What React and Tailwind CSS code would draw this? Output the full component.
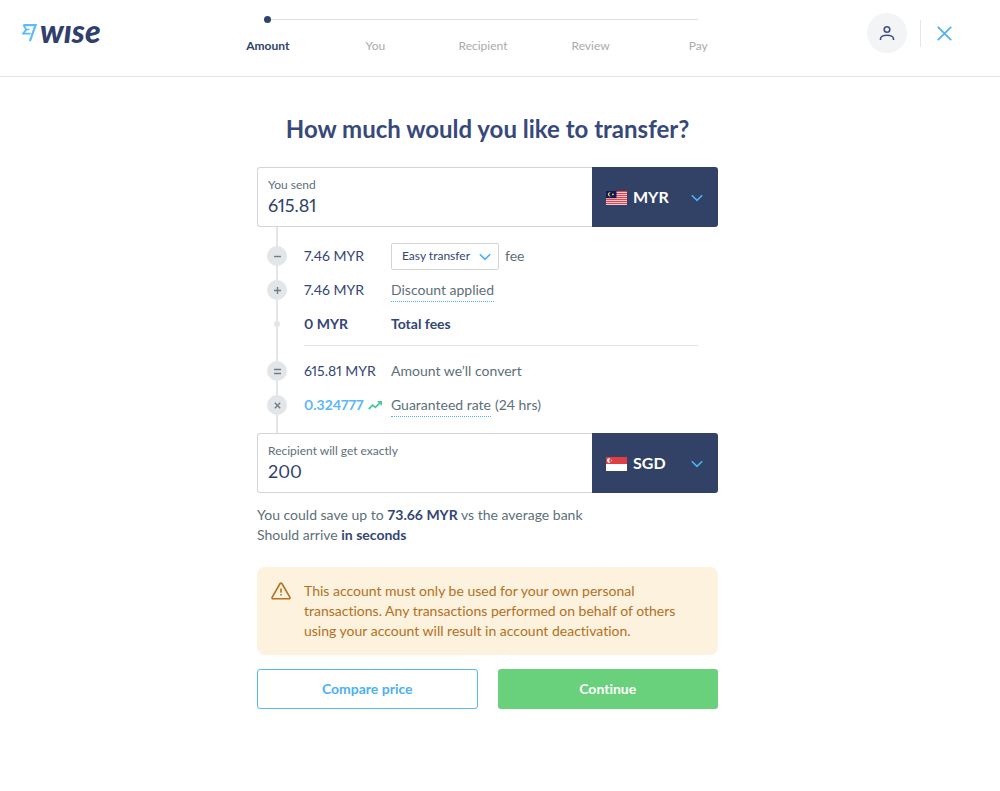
import React from "react";

const steps = ["Amount", "You", "Recipient", "Review", "Pay"];

function Chevron({ className }) {
  return (
    <svg className={className} viewBox="0 0 12 8" fill="none" stroke="currentColor" strokeWidth="1.6" aria-hidden="true">
      <path d="M0.8 1.2 6 6.4l5.2-5.2" />
    </svg>
  );
}

function Logo() {
  return (
    <a href="#home" aria-label="Wise" className="flex items-end gap-[3px]">
      <svg className="mb-[5px] h-[18px] w-[15px]" viewBox="0 0 15 18" fill="none" stroke="#5cbcf8" aria-hidden="true">
        <path d="M1.4 1.2H13.6L7.9 17.2" strokeWidth="2.2" />
        <path d="M1.6 1.2 4.2 5.6 1.2 9.6H8.6" strokeWidth="1.9" />
        <path d="M3.8 5.5H7.6" strokeWidth="1.4" />
      </svg>
      <span className="text-[32px] leading-8 font-black italic text-[#303f6b]">wıse</span>
    </a>
  );
}

function Stepper() {
  return (
    <nav aria-label="Progress" className="pt-4">
      <div className="mr-[54px] ml-[50px] flex h-[7px] items-center">
        <span className="size-[7px] rounded-full bg-[#2e4369]" />
        <span className="h-px flex-1 bg-[#dcdfe5]" />
      </div>
      <ol className="mt-[15px] grid grid-cols-5 text-center text-xs text-[#a9abac]">
        {steps.map((step, i) => (
          <li key={step} aria-current={i === 0 ? "step" : undefined} className={i === 0 ? "font-bold text-[#2e4369]" : ""}>
            {step}
          </li>
        ))}
      </ol>
    </nav>
  );
}

function MalaysiaFlag() {
  return (
    <svg className="h-[14px] w-[21px]" viewBox="0 0 21 14" aria-hidden="true">
      <rect width="21" height="14" fill="#fbe9ea" />
      {[0, 2, 4, 6, 8, 10, 12].map((y) => (
        <rect key={y} y={y} width="21" height="1.2" fill="#e0434d" />
      ))}
      <rect width="10.5" height="7.2" fill="#0d1a5c" />
      <path d="M5 1.6A2.1 2.1 0 1 0 5 5.2 1.8 1.8 0 1 1 5 1.6Z" fill="#f5d33c" />
      <circle cx="6.9" cy="3.4" r="0.9" fill="#f5d33c" />
    </svg>
  );
}

function SingaporeFlag() {
  return (
    <svg className="h-[14px] w-[21px]" viewBox="0 0 21 14" aria-hidden="true">
      <rect width="21" height="14" fill="#fff" />
      <rect width="21" height="7" fill="#df3f43" />
      <path d="M4.2 1.4A2.3 2.3 0 1 0 4.2 5.6 2.7 2.7 0 0 1 4.2 1.4Z" fill="#fff" />
      <circle cx="5" cy="2.6" r="0.4" fill="#fff" />
      <circle cx="5.8" cy="3.5" r="0.4" fill="#fff" />
      <circle cx="5" cy="4.5" r="0.4" fill="#fff" />
    </svg>
  );
}

function MoneyField({ id, label, value, currency, flag }) {
  return (
    <div className="flex h-[60px]">
      <div className="flex min-w-0 flex-1 flex-col justify-center rounded-l-[3px] border border-r-0 border-[#d3d5d8] px-[10px]">
        <label htmlFor={id} className="text-xs leading-4 text-[#5d7079]">{label}</label>
        <input id={id} defaultValue={value} className="h-6 w-full text-lg leading-6 text-[#2e4369] proportional-nums outline-none" />
      </div>
      <div className="relative w-[126px] rounded-r-[3px] bg-[#324166] text-white">
        <span className="pointer-events-none absolute top-6 left-[14px]">{flag}</span>
        <select
          aria-label={label + " currency"}
          defaultValue={currency}
          className="size-full appearance-none bg-transparent pl-[41px] text-base font-bold outline-none"
        >
          <option>{currency}</option>
        </select>
        <Chevron className="pointer-events-none absolute top-[27px] right-[15px] h-2 w-3 text-[#4db1f5]" />
      </div>
    </div>
  );
}

const symbols = {
  minus: "M1 4.5h7",
  plus: "M1 4.5h7M4.5 1v7",
  equals: "M1 2.5h7M1 6.5h7",
  times: "M1.8 1.8l5.4 5.4M7.2 1.8 1.8 7.2",
};

function Row({ symbol, children }) {
  return (
    <li className="flex h-[34px] items-center">
      <span className="flex w-10 shrink-0 items-center pl-[10px]">
        {symbol ? (
          <span className="flex size-5 items-center justify-center rounded-full bg-[#e2e6e8]">
            <svg className="size-[9px]" viewBox="0 0 9 9" fill="none" stroke="#6f7e86" strokeWidth="1.4" aria-hidden="true">
              <path d={symbols[symbol]} />
            </svg>
          </span>
        ) : (
          <span className="mx-[7px] size-[6px] rounded-full bg-[#e2e6e8]" />
        )}
      </span>
      <span className="flex flex-1 items-center pl-[7px]">{children}</span>
    </li>
  );
}

function Amount({ children, className = "" }) {
  return <span className={"w-[87px] shrink-0 whitespace-nowrap proportional-nums " + className}>{children}</span>;
}

function Breakdown() {
  return (
    <div className="relative pt-3 pb-[11px] text-[#344675]">
      <span className="absolute inset-y-0 left-[19px] w-[2px] bg-[#e2e6e8]" />
      <ul className="relative">
        <Row symbol="minus">
          <Amount>7.46 MYR</Amount>
          <span className="relative">
            <select
              aria-label="Transfer type"
              defaultValue="Easy transfer"
              className="h-[27px] w-[108px] appearance-none rounded-[2px] border border-[#d3d5d8] bg-white pl-[10px] text-xs outline-none"
            >
              <option>Easy transfer</option>
            </select>
            <Chevron className="pointer-events-none absolute top-[10px] right-2 h-2 w-3 text-[#4db1f5]" />
          </span>
          <span className="pl-[6px] text-[#5d7079]">fee</span>
        </Row>
        <Row symbol="plus">
          <Amount>7.46 MYR</Amount>
          <a href="#discount" className="border-y border-t-transparent border-b-[#4db1f5] border-dotted py-px text-[#5d7079]">Discount applied</a>
        </Row>
        <Row>
          <Amount className="font-bold">0 MYR</Amount>
          <span className="font-bold">Total fees</span>
        </Row>
      </ul>
      <hr className="mt-1 mr-5 mb-2 ml-[47px] border-[#e2e6e8]" />
      <ul className="relative">
        <Row symbol="equals">
          <Amount>615.81 MYR</Amount>
          <span className="text-[#5d7079]">Amount we’ll convert</span>
        </Row>
        <Row symbol="times">
          <Amount className="flex items-center gap-1 font-bold text-[#5bb7f7]">
            0.324777
            <svg className="h-[9px] w-[14px]" viewBox="0 0 14 9" fill="none" aria-hidden="true">
              <path d="M0.8 8 4.6 4.2 7.4 6.4 12.4 1.4" stroke="#4fc59b" strokeWidth="1.8" />
              <path d="M9 0h5v5Z" fill="#4fc59b" />
            </svg>
          </Amount>
          <a href="#rate" className="border-y border-t-transparent border-b-[#4db1f5] border-dotted py-px text-[#5d7079]">Guaranteed rate</a>
          <span className="pl-1 text-[#5d7079]">(24 hrs)</span>
        </Row>
      </ul>
    </div>
  );
}

export default function App() {
  return (
    <div className="min-h-screen bg-white font-['Lato','Liberation_Sans',sans-serif] text-sm [font-variant-ligatures:none]">
      <header className="grid h-[77px] grid-cols-[1fr_538px_1fr] border-b border-[#e4e5e7] pr-[34px]">
        <div className="flex h-[62px] items-center pl-[22px]">
          <Logo />
        </div>
        <Stepper />
        <div className="flex h-[66px] items-center justify-end">
          <button aria-label="Account" className="flex size-10 items-center justify-center rounded-full bg-[#f2f4f6]">
            <svg className="size-4" viewBox="0 0 16 16" fill="none" stroke="#3f5080" strokeWidth="1.6" aria-hidden="true">
              <circle cx="8" cy="4.5" r="2.8" />
              <path d="M1.5 15v-1.2c0-2 2.8-3.5 6.5-3.5s6.5 1.5 6.5 3.5V15" />
            </svg>
          </button>
          <span className="ml-[13px] h-[27px] w-px bg-[#e4e6e9]" />
          <button aria-label="Close" className="ml-[2px] flex size-[43px] items-center justify-center">
            <svg className="size-[15px]" viewBox="0 0 15 15" fill="none" stroke="#4db1f5" strokeWidth="1.7" aria-hidden="true">
              <path d="M0.8 0.8l13.4 13.4M14.2 0.8 0.8 14.2" />
            </svg>
          </button>
        </div>
      </header>

      <main className="pr-[25px]">
        <div className="mx-auto max-w-[461px] pt-9 pb-10">
          <h1 className="text-center text-2xl leading-8 font-bold whitespace-nowrap text-[#37497b]">How much would you like to transfer?</h1>
          <div className="mt-[22px]">
            <MoneyField id="send" label="You send" value="615.81" currency="MYR" flag={<MalaysiaFlag />} />
            <Breakdown />
            <MoneyField id="receive" label="Recipient will get exactly" value="200" currency="SGD" flag={<SingaporeFlag />} />
          </div>
          <div className="mt-3 text-[#5d7079]">
            <p>You could save up to <b className="text-[#344675]">73.66 MYR</b> vs the average bank</p>
            <p>Should arrive <b className="text-[#344675]">in seconds</b></p>
          </div>
          <div role="note" className="mt-[22px] flex gap-[13px] rounded-lg bg-[#fcf2de] py-[14px] pr-5 pl-[14px] text-[#b3701f]">
            <svg className="mt-px h-[18px] w-5 shrink-0" viewBox="0 0 20 18" fill="none" stroke="currentColor" strokeWidth="1.6" strokeLinejoin="round" aria-hidden="true">
              <path d="M9.1 1.5a1 1 0 0 1 1.8 0l8 13.8a1 1 0 0 1-.9 1.5H2a1 1 0 0 1-.9-1.5Z" />
              <path d="M10 6.5v4.2M10 12v1.6" />
            </svg>
            <p>This account must only be used for your own personal transactions. Any transactions performed on behalf of others using your account will result in account deactivation.</p>
          </div>
          <div className="mt-[14px] grid grid-cols-2 gap-5 font-bold">
            <button className="h-10 rounded-[3px] border border-[#5bb7f7] text-[#4db1f5]">Compare price</button>
            <button className="h-10 rounded-[3px] bg-[#69d07b] text-white">Continue</button>
          </div>
        </div>
      </main>
    </div>
  );
}
